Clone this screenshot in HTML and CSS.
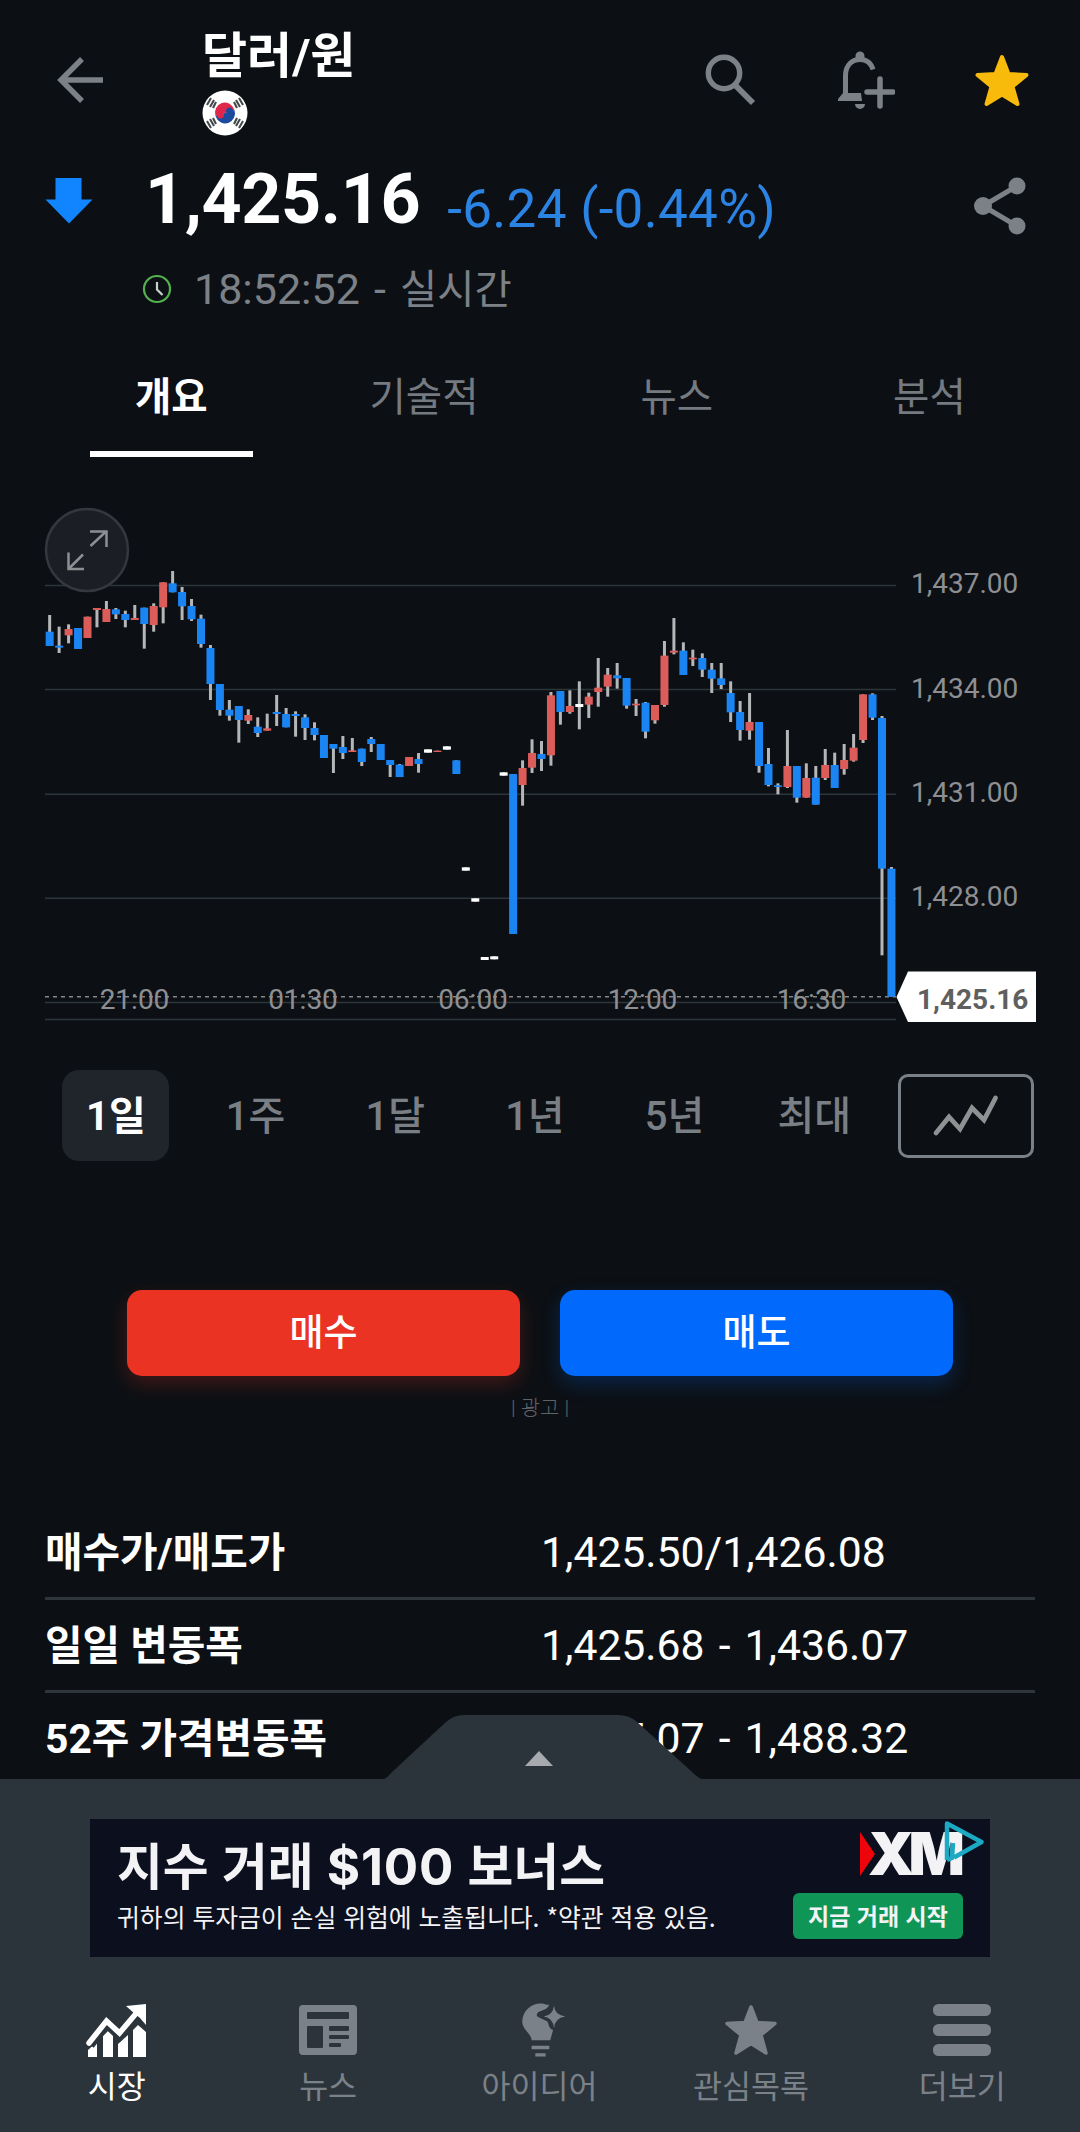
FILE: index.html
```html
<!DOCTYPE html>
<html lang="ko">
<head>
<meta charset="utf-8">
<title>달러/원</title>
<link rel="stylesheet" href="styles.css">
</head>
<body>
<div class="screen">
  <header class="header">
    <svg class="back" width="48" height="48" viewBox="0 0 48 48"><path d="M47 24H4M26 3 5 24l21 21" fill="none" stroke="#7c8187" stroke-width="5.5"/></svg>
    <div class="title-block">
      <h1 class="title">달러/원</h1>
      <svg class="flag" width="46" height="46" viewBox="0 0 46 46">
        <circle cx="23" cy="23" r="22.5" fill="#fff"/>
        <g transform="rotate(-18 23 23)"><path d="M13 23a10 10.500 0 0 1 20 0z" fill="#e0264a"/><path d="M13 23a10 10.500 0 0 0 20 0z" fill="#1c4a9e"/><circle cx="18" cy="23.500" r="3.500" fill="#e0264a"/><circle cx="28" cy="22.500" r="3.500" fill="#1c4a9e"/></g>
        <g stroke="#45494c" stroke-width="2.1"><path d="M5 15l4-7M8 17l4-7M11 18l3-6M41 15l-4-7M38 17l-4-7M35 18l-3-6M5 31l4 7M8 29l4 7M11 28l3 6M41 31l-4 7M38 29l-4 7M35 28l-3 6"/></g>
      </svg>
    </div>
    <div class="actions">
      <svg width="52" height="54" viewBox="0 0 52 54"><circle cx="19" cy="20" r="15.7" fill="none" stroke="#7c8187" stroke-width="5.4"/><path d="M31 33l17 17" stroke="#7c8187" stroke-width="6"/></svg>
      <svg width="58" height="60" viewBox="0 0 58 60"><g fill="none" stroke="#7c8187" stroke-width="5"><path d="M8.500 46V26C8.500 14 16 9.500 23 9.500c6 0 11 3.500 13 10"/><path d="M43 29v27M30 42h26" stroke-width="5.500" stroke-linecap="round"/></g><path d="M18.500 10V6a4.500 4.500 0 0 1 9 0v4zM1 51v-2l5-6h18l1 8zM18 54h10a5 5 0 0 1-10 0z" fill="#7c8187"/></svg>
      <svg width="54" height="54" viewBox="0 0 54 54"><path d="M27 4l6.500 17 18 1-14 11.500 5 17.500L27 41.500 11.500 51l5-17.500L2.500 22l18-1z" fill="#f9bb0b" stroke="#f9bb0b" stroke-width="4" stroke-linejoin="round"/></svg>
    </div>
  </header>

  <section class="quote">
    <svg class="down" width="48" height="46" viewBox="0 0 48 46"><path d="M10.500 0h26v21.500H47.500L24 45.500.5 21.500h10z" fill="#1085ff"/></svg>
    <span class="price">1,425.16</span>
    <span class="change">-6.24 (-0.44%)</span>
    <svg class="share" width="54" height="60" viewBox="0 0 54 60"><path d="M44 10 10 30l34 20" fill="none" stroke="#7c8187" stroke-width="5"/><g fill="#7c8187"><circle cx="44" cy="10" r="8.500"/><circle cx="10" cy="30" r="9"/><circle cx="44" cy="50" r="8.500"/></g></svg>
  </section>
  <div class="time">
    <svg width="30" height="30" viewBox="0 0 30 30"><circle cx="15" cy="15" r="13" fill="none" stroke="#55b04f" stroke-width="2.200"/><path d="M15 8v7.500l5.500 5.500" fill="none" stroke="#c4d4c8" stroke-width="2.200"/></svg>
    <span>18:52:52 - <span class="live">실시간</span></span>
  </div>

  <nav class="tabs">
    <span class="tab active">개요</span>
    <span class="tab">기술적</span>
    <span class="tab">뉴스</span>
    <span class="tab">분석</span>
  </nav>

  <svg class="chart" width="1080" height="540" viewBox="0 0 1080 540">
    <path class="grid" d="M45 85.500H896M45 189.500H896M45 294.200H896M45 398.200H896M45 502.500H896M45 519.500H896"/>
    <path class="current" d="M45 496.700H896"/>
    <g id="candles" transform="scale(.33333)"></g>
    <g class="axis">
      <text x="911" y="92.700">1,437.00</text>
      <text x="911" y="197.700">1,434.00</text>
      <text x="911" y="301.700">1,431.00</text>
      <text x="911" y="405.900">1,428.00</text>
    </g>
    <g class="axis hours">
      <text x="134.500" y="509">21:00</text>
      <text x="303" y="509">01:30</text>
      <text x="473" y="509">06:00</text>
      <text x="642.500" y="509">12:00</text>
      <text x="811.500" y="509">16:30</text>
    </g>
    <path d="M896.500 497 908 471.500h128V522H908z" fill="#fff"/>
    <text class="tag" x="917" y="509">1,425.16</text>
    <circle cx="87" cy="50" r="41" fill="#1b1e24" stroke="#34383e" stroke-width="2.500"/>
    <path d="M90.500 46 106 31.500M90 31.500h16.500V47M83 54.500 68.500 69M84 69H68.500V52.500" fill="none" stroke="#8d8f93" stroke-width="2.500"/>
  </svg>

  <div class="ranges">
    <span class="range"><b class="pill on">1일</b></span>
    <span class="range"><b class="pill">1주</b></span>
    <span class="range"><b class="pill">1달</b></span>
    <span class="range"><b class="pill">1년</b></span>
    <span class="range"><b class="pill">5년</b></span>
    <span class="range"><b class="pill">최대</b></span>
    <span class="style-btn"><svg width="68" height="44" viewBox="0 0 68 44"><path d="M4 39l13-16 11 12 12-21 12 12L63.500 4" fill="none" stroke="#8f9193" stroke-width="4.800" stroke-linecap="round"/></svg></span>
  </div>

  <div class="trade">
    <span class="btn buy">매수</span>
    <span class="btn sell">매도</span>
  </div>
  <div class="ad-note">| 광고 |</div>

  <dl class="facts">
    <div class="fact"><dt>매수가/매도가</dt><dd>1,425.50/1,426.08</dd></div>
    <div class="fact"><dt>일일 변동폭</dt><dd>1,425.68 - 1,436.07</dd></div>
    <div class="fact"><dt>52주 가격변동폭</dt><dd>1,365.07 - 1,488.32</dd></div>
  </dl>

  <footer class="dock">
    <svg class="handle" width="318" height="66" viewBox="0 0 318 66"><path d="M0 65Q3 64 7 59L62 8Q70 1 80 1H234Q245 1 252 7L307 57Q314 64 318 65v1H0z" fill="#2c343b"/><path d="M155 37l14 15h-28z" fill="#a7abb0"/></svg>
    <div class="banner">
      <div class="copy">
        <div class="headline">지수 거래 <span class="amount">$100</span> 보너스</div>
        <div class="risk">귀하의 투자금이 손실 위험에 노출됩니다. *약관 적용 있음.</div>
      </div>
      <div class="brand">
        <div class="logo"><svg width="16" height="44" viewBox="0 0 16 44"><path d="M0 0l15 22L0 44z" fill="#f0040c"/></svg><span>XM</span></div>
        <span class="cta">지금 거래 시작</span>
      </div>
      <svg class="choices" width="44" height="46" viewBox="0 0 44 46"><path d="M5 41V4.500L39.500 23 12 38.500M5 41l5-2 1-15" fill="none" stroke="#1ba9c4" stroke-width="4.500" stroke-linejoin="round"/></svg>
    </div>
    <nav class="nav">
      <span class="item on"><svg width="62" height="56" viewBox="0 0 62 56" fill="#fff"><path d="M2 55V48l9-8v15zM17 55V34l5-5 5 5v21zM32 55V42l10-9v22zM47 55V28l5-5 8 7v25z"/><path d="M3 42 20.500 20l13 11L52 7" fill="none" stroke="#2c343b" stroke-width="12"/><path d="M3 41 20.500 19l13 12L53 8" fill="none" stroke="#fff" stroke-width="5.500" stroke-linecap="round"/><path d="M40 4l20-2v21l-6-7-5-4z"/></svg>시장</span>
      <span class="item"><svg width="62" height="56" viewBox="0 0 62 56"><rect x="2" y="3" width="58" height="50" rx="4" fill="#7b8188"/><g fill="#2c343b"><rect x="10" y="10" width="42" height="7" rx="1"/><rect x="10" y="24" width="16" height="22" rx="1"/><rect x="32" y="24" width="20" height="5" rx="1"/><rect x="32" y="33" width="20" height="4" rx="1"/><rect x="32" y="41" width="12" height="4" rx="1"/></g></svg>뉴스</span>
      <span class="item"><svg width="62" height="60" viewBox="0 0 62 60" fill="#7b8188"><path d="M38 3c-10-5-26 3-26 18 0 9 10 13 10 20h20l3-11c-4 0-5-7-6-9l-10-5c-2-1-2-3 0-5 6-3 9-2 12-8z"/><path d="M46 4q1 10 12 11.500Q47 17 46 28 45 17 35 15.500 45 14 46 4zM22 47h19v3.500H22zM26 55h11v3.500H26z"/></svg>아이디어</span>
      <span class="item"><svg width="62" height="56" viewBox="0 0 62 56"><path d="M31 5l6 15.500 18 1-14 11.500 5 18-15-9.500L16 51l5-18L7 21.500l18-1z" fill="#7b8188" stroke="#7b8188" stroke-width="3.500" stroke-linejoin="round"/></svg>관심목록</span>
      <span class="item"><svg width="62" height="56" viewBox="0 0 62 56" fill="#7b8188"><rect x="2" y="2" width="58" height="12" rx="5.500"/><rect x="2" y="22" width="58" height="12" rx="5.500"/><rect x="2" y="42" width="58" height="12" rx="5.500"/></svg>더보기</span>
    </nav>
  </footer>
</div>
<script src="chart.js"></script>
</body>
</html>
```
FILE: chart.js
```js
// Each candle: colour, high, body top, body bottom, low (chart units, three per pixel)
const candles = `b 345 395 438 438|b 380 437 443 459|r 373 387 406 430|b 384 384 447 447|r 350 350 414 414|r 324 324 330 382|r 303 327 366 366|b 324 328 343 357|b 332 342 360 382|r 315 354 360 360
b 323 323 372 446|r 310 318 375 395|r 247 247 322 370|b 213 250 277 277|b 261 276 319 360|b 297 318 358 363|b 344 356 432 443|b 435 444 552 600|b 552 552 630 647|b 600 629 647 662
b 618 618 660 728|r 628 645 662 672|b 652 680 699 711|r 641 685 692 692|b 585 636 642 678|b 624 642 682 682|b 634 642 648 710|b 643 652 684 720|b 667 684 705 721|b 705 705 774 774
b 732 732 746 819|b 708 741 759 777|r 714 751 756 756|b 746 746 786 798|b 711 717 732 756|b 732 732 780 780|b 780 780 795 831|b 792 794 831 831|r 771 771 798 798|b 759 777 792 818
w 748 748 758 758|r 752 752 756 756|w 739 739 749 749|b 781 781 822 822|w 1102 1102 1112 1112|w 1195 1195 1205 1205|w 1371 1371 1380 1380|w 1369 1369 1378 1378|w 817 817 827 827|b 822 822 1302 1302
r 781 804 855 917|r 718 759 803 819|b 723 762 777 813|r 576 586 766 797|b 573 573 636 674|r 571 618 636 641|w 544 612 621 688|r 578 590 614 654|r 474 563 576 620|r 504 524 560 590
b 489 526 535 566|b 534 534 617 626|r 597 611 616 648|b 606 608 695 715|r 615 615 661 671|r 423 467 615 620|r 354 452 458 463|b 427 452 525 525|r 449 473 478 498|b 460 474 509 531
b 489 509 536 579|b 489 535 555 567|b 544 579 637 666|b 603 636 690 722|r 579 666 692 719|b 666 666 798 818|b 744 792 855 859|b 850 856 861 883|r 690 798 861 864|b 798 798 893 908
r 790 834 893 893|b 798 833 914 914|r 747 795 834 840|b 758 795 864 864|r 732 780 807 824|r 702 743 782 785|r 583 583 720 729|b 580 583 653 660|b 648 654 1106 1366|b 1101 1106 1490 1490`;
const colors = { b: "#1a84f2", r: "#dc5c59", w: "#ffffff" };
const group = document.getElementById("candles");

function rect(x, y, width, height, fill) {
  const el = document.createElementNS("http://www.w3.org/2000/svg", "rect");
  Object.entries({ x, y, width, height, fill }).forEach(([k, v]) => el.setAttribute(k, v));
  group.append(el);
}

candles.split(/[|\n]/).forEach((row, i) => {
  const [kind, ...values] = row.split(" ");
  const [high, top, bottom, low] = values.map(Number);
  const center = 149 + i * 28.375;
  if (low > high) rect(center - 4.5, high, 9, low - high, "#b5b6b8");
  rect(center - 12, top, 24, bottom - top, colors[kind]);
});
```
FILE: styles.css
```css
* { box-sizing: border-box; }
body {
  margin: 0;
  background: #0c1014;
  color: #fff;
  font-family: Roboto, "Noto Sans CJK KR", sans-serif;
}
svg { display: block; flex: none; }
.screen {
  position: relative;
  width: 1080px;
  height: 2132px;
  overflow: hidden;
}

.header { display: flex; height: 145px; padding-left: 56px; }
.back { margin-top: 56px; }
.title-block { margin-left: 98px; padding-top: 30px; }
.title { margin: 0; font-size: 49px; line-height: 54px; font-weight: 700; }
.flag { margin-top: 6px; }
.actions {
  display: flex;
  align-items: center;
  gap: 80px;
  height: 159px;
  margin-left: auto;
  padding-right: 51px;
}

.quote { display: flex; align-items: center; height: 108px; padding: 0 53px 0 45px; }
.down { margin-top: 3px; }
.price { margin-left: 52px; font-size: 70px; line-height: 108px; font-weight: 700; letter-spacing: -0.4px; }
.change { margin: 20px 0 0 27px; color: #2b83e4; font-size: 53px; line-height: 80px; letter-spacing: 0.3px; }
.share { margin: 14px 0 0 auto; }
.time {
  display: flex;
  align-items: center;
  gap: 22px;
  height: 72px;
  padding-left: 142px;
  color: #7c8087;
  font-size: 43px;
  line-height: 72px;
  word-spacing: 3.5px;
}
.live { font-size: 40.5px; }

.tabs { display: flex; margin-top: 15px; padding: 0 24px 0 45px; }
.tab {
  width: 252.7px;
  height: 117px;
  color: #757a81;
  font-size: 39.5px;
  line-height: 115px;
  text-align: center;
}
.tab.active { color: #fff; font-weight: 700; }
.tab.active::after {
  content: "";
  display: block;
  width: 163px;
  height: 6px;
  margin: -4px auto 0;
  background: #fff;
}

.chart { margin-top: 43px; }
.grid { fill: none; stroke: #2b353a; stroke-width: 1.5; }
.current { stroke: #84878a; stroke-width: 1.5; stroke-dasharray: 4 4; }
.axis { fill: #8e8f92; font-size: 28px; }
.hours { text-anchor: middle; }
.tag { fill: #5f5f60; font-size: 28px; font-weight: 700; }

.ranges { display: flex; align-items: center; height: 91px; margin-top: 30px; padding-left: 46px; }
.range { display: flex; justify-content: center; width: 139.7px; }
.pill {
  width: 107px;
  height: 91px;
  border-radius: 17px;
  color: #7a7f86;
  font-size: 40px;
  line-height: 93px;
  font-weight: 500;
  text-align: center;
}
.pill.on { background: #1f252b; color: #fff; font-weight: 700; }
.style-btn {
  display: flex;
  align-items: center;
  justify-content: center;
  width: 136px;
  height: 84px;
  margin-left: 14px;
  border: 3px solid #7a8087;
  border-radius: 10px;
}

.trade { display: flex; gap: 40px; margin-top: 129px; padding: 0 127px; }
.btn {
  flex: 1;
  height: 86px;
  border-radius: 15px;
  font-size: 37px;
  line-height: 88px;
  font-weight: 500;
  text-align: center;
}
.buy { background: #eb3323; box-shadow: 0 8px 20px rgba(235, 51, 35, .24); }
.sell { background: #0169fc; box-shadow: 0 8px 20px rgba(1, 105, 252, .24); }
.ad-note {
  margin-top: 20px;
  color: #5f6368;
  font-size: 21px;
  line-height: 24px;
  font-weight: 300;
  text-align: center;
}

.facts { margin: 87px 45px 0; }
.fact { display: flex; height: 93px; border-bottom: 3px solid #2e353b; }
.fact dt { width: 496px; font-size: 40.8px; line-height: 92px; font-weight: 700; }
.fact dd { margin: 0; font-size: 42.7px; line-height: 90px; word-spacing: 3.5px; }

.dock {
  position: absolute;
  left: 0;
  bottom: 0;
  width: 1080px;
  height: 353px;
  padding-top: 40px;
  background: #2c343b;
}
.handle { position: absolute; left: 384px; top: -65px; }
.banner {
  position: relative;
  display: flex;
  justify-content: space-between;
  width: 900px;
  height: 138px;
  margin: 0 auto;
  padding: 0 27px;
  background: #0c0f1d;
  color: #f3f3f6;
}
.copy { padding-top: 18px; white-space: nowrap; }
.headline { font: 700 49.8px/60px Inter, "Noto Sans CJK KR", sans-serif; word-spacing: 1.5px; }
.amount { font-size: 51px; letter-spacing: 0.8px; }
.risk { font: 400 24.8px/36px "Noto Sans CJK KR", sans-serif; margin-top: 1px; }
.brand { width: 170px; padding-top: 13px; }
.logo { display: flex; padding-left: 67px; }
.logo span { margin-left: -8px; font: 900 59px/44px Inter, sans-serif; letter-spacing: -6px; }
.cta {
  display: block;
  height: 46px;
  margin-top: 17px;
  border-radius: 6px;
  background: #0f9556;
  font: 700 23px/44px "Noto Sans CJK KR", sans-serif;
  text-align: center;
}
.choices { position: absolute; right: 4px; top: 0; }
.nav { display: flex; padding: 45px 12px 0 11px; }
.item {
  display: flex;
  flex: 1;
  flex-direction: column;
  align-items: center;
  color: #7b8188;
  font-size: 31.5px;
  line-height: 40px;
}
.item svg { height: 56px; margin-bottom: 10px; overflow: visible; }
.item.on { color: #fff; }
```
